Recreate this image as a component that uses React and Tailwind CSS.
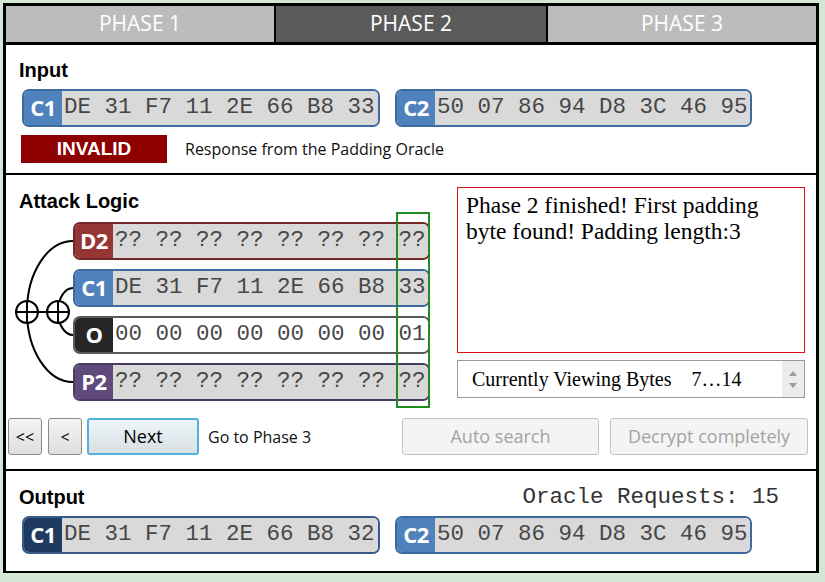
import React from "react";

const MONO = "font-['Liberation_Mono','Courier_New',monospace]";
const UI = "font-['Open_Sans','Noto_Sans',sans-serif]";
const HEAD = "font-['Liberation_Sans',Arial,sans-serif]";
const SERIF = "font-['Liberation_Serif','Times_New_Roman',serif]";

function Block({ label, bytes, labelBg, border, bodyBg = "bg-[#d9d9d9]", className = "" }) {
  return (
    <div className={`flex h-[38px] shrink-0 overflow-hidden rounded-[7px] border-2 ${border} ${className}`}>
      <div className={`flex w-[38px] shrink-0 items-center justify-center pb-[3px] text-[22px] font-bold leading-none tracking-tight text-white ${UI} ${labelBg}`}>
        {label}
      </div>
      <div className={`flex flex-1 items-center whitespace-pre pl-[2px] text-[22.5px] text-[#474747] ${MONO} ${bodyBg}`}>
        {bytes.join(" ")}
      </div>
    </div>
  );
}

const C1 = ["DE", "31", "F7", "11", "2E", "66", "B8", "33"];
const C2 = ["50", "07", "86", "94", "D8", "3C", "46", "95"];
const Q = ["??", "??", "??", "??", "??", "??", "??", "??"];
const O = ["00", "00", "00", "00", "00", "00", "00", "01"];
const OUT = ["DE", "31", "F7", "11", "2E", "66", "B8", "32"];

function XorLines() {
  return (
    <svg className="absolute left-[-60px] top-0" width="62" height="180" viewBox="0 0 62 180" fill="none" stroke="#000" strokeWidth="2">
      <path d="M60 19 A46 70.5 0 0 0 60 160" />
      <path d="M60 66 A15 23.5 0 0 0 60 113" />
      <circle cx="14" cy="90" r="11" fill="#fff" />
      <circle cx="45" cy="90" r="11" fill="#fff" />
      <line x1="14" y1="79" x2="14" y2="101" />
      <line x1="45" y1="79" x2="45" y2="101" />
      <line x1="2" y1="90" x2="57" y2="90" />
    </svg>
  );
}

function WinButton({ children, className = "" }) {
  return (
    <button className={`flex h-[37px] items-center justify-center rounded-[3px] border bg-linear-to-b ${UI} ${className}`}>
      {children}
    </button>
  );
}

export default function App() {
  return (
    <div className="h-[582px] w-[825px] bg-[#d3e7d6] pl-[3px] pt-[3px]">
      <div className="flex h-[570px] w-[816px] flex-col border-[3px] border-b-2 border-black bg-white">
        {/* tabs */}
        <div className={`flex h-[39px] shrink-0 border-b-[3px] border-black text-[21px] text-white ${UI}`}>
          <div className="flex w-[270px] items-center justify-center border-r-2 border-black bg-[#bcbcbc]">PHASE 1</div>
          <div className="flex w-[272px] items-center justify-center border-r-2 border-black bg-[#5a5a5a]">PHASE 2</div>
          <div className="flex flex-1 items-center justify-center bg-[#bcbcbc]">PHASE 3</div>
        </div>

        {/* input */}
        <div className="flex h-[130px] shrink-0 flex-col border-b-2 border-black pl-[16px] pt-[13px]">
          <div className={`-ml-[3px] text-[20px] font-bold leading-[24px] text-black ${HEAD}`}>Input</div>
          <div className="mt-[7px] flex gap-[15px]">
            <Block label="C1" bytes={C1} labelBg="bg-[#4f81bd]" border="border-[#3d6b9f]" className="w-[358px]" />
            <Block label="C2" bytes={C2} labelBg="bg-[#4f81bd]" border="border-[#3d6b9f]" className="w-[357px]" />
          </div>
          <div className="mt-[8px] flex items-center">
            <div className={`-ml-[1px] flex h-[28px] w-[146px] items-center justify-center bg-[#8e0000] text-[19px] font-bold text-white ${HEAD}`}>
              INVALID
            </div>
            <span className={`ml-[18px] text-[16px] text-[#111] ${UI}`}>Response from the Padding Oracle</span>
          </div>
        </div>

        {/* attack logic */}
        <div className="flex h-[296px] shrink-0 flex-col border-b-2 border-black pt-[12px]">
          <div className="flex">
            <div className="w-[451px] pl-[13px]">
              <div className={`mt-[2px] text-[20px] font-bold leading-[24px] text-black ${HEAD}`}>Attack Logic</div>
              <div className="relative ml-[54px] mt-[9px] flex w-[357px] flex-col gap-[9px]">
                <XorLines />
                <Block label="D2" bytes={Q} labelBg="bg-[#963634]" border="border-[#722826]" />
                <Block label="C1" bytes={C1} labelBg="bg-[#4f81bd]" border="border-[#3d6b9f]" />
                <Block label="O" bytes={O} labelBg="bg-[#262626]" border="border-[#5a5a5a]" bodyBg="bg-white" />
                <Block label="P2" bytes={Q} labelBg="bg-[#604a7b]" border="border-[#4a3a60]" />
                <div className="absolute left-[323px] top-[-10px] h-[196px] w-[34px] border-2 border-[#1e8c1e]" />
              </div>
            </div>
            <div className="flex w-[348px] flex-col gap-[7px]">
              <div className={`h-[166px] border border-[#e0101a] pl-[8px] pt-[4px] text-[23.5px] leading-[26px] text-black ${SERIF}`}>
                Phase 2 finished! First padding
                <br />
                byte found! Padding length:3
              </div>
              <div className="flex h-[38px] border border-[#9a9a9a]">
                <div className={`flex flex-1 items-center pl-[14px] text-[20px] text-black ${SERIF}`}>
                  <span>Currently Viewing Bytes</span>
                  <span className="ml-[20px]">7…14</span>
                </div>
                <div className="flex w-[22px] flex-col items-center justify-center gap-[7px] bg-[#ececec]">
                  <svg width="8" height="5" viewBox="0 0 8 5"><path d="M0 5 L4 0 L8 5 Z" fill="#9a9a9a" /></svg>
                  <svg width="8" height="5" viewBox="0 0 8 5"><path d="M0 0 L8 0 L4 5 Z" fill="#9a9a9a" /></svg>
                </div>
              </div>
            </div>
          </div>

          <div className="mt-[17px] flex items-center pl-[2px] pr-[8px]">
            <WinButton className="w-[34px] border-[#8a8a8a] from-[#f4f4f4] to-[#dedede] text-[16px] text-black">&lt;&lt;</WinButton>
            <WinButton className="ml-[6px] w-[34px] border-[#8a8a8a] from-[#f4f4f4] to-[#dedede] text-[16px] text-black">&lt;</WinButton>
            <WinButton className="ml-[5px] w-[112px] border-2 border-[#52b0dc] from-[#eef6fb] to-[#d9dfe3] text-[18px] text-black">Next</WinButton>
            <span className={`ml-[9px] text-[16px] text-[#111] ${UI}`}>Go to Phase 3</span>
            <WinButton className="ml-auto w-[197px] border-[#c2c2c2] from-[#f4f4f4] to-[#f4f4f4] text-[18px] text-[#a3a3a3]">Auto search</WinButton>
            <WinButton className="ml-[11px] w-[198px] border-[#c2c2c2] from-[#f4f4f4] to-[#f4f4f4] text-[18px] text-[#a3a3a3]">Decrypt completely</WinButton>
          </div>
        </div>

        {/* output */}
        <div className="flex flex-1 flex-col pl-[16px] pt-[14px]">
          <div className="flex items-center pr-[37px]">
            <div className={`-ml-[3px] text-[20px] font-bold leading-[24px] text-black ${HEAD}`}>Output</div>
            <div className={`ml-auto whitespace-pre text-[22.5px] leading-[24px] text-[#333] ${MONO}`}>Oracle Requests: 15</div>
          </div>
          <div className="mt-[7px] flex gap-[15px]">
            <Block label="C1" bytes={OUT} labelBg="bg-[#1f3a60]" border="border-[#365b88]" className="w-[358px]" />
            <Block label="C2" bytes={C2} labelBg="bg-[#4f81bd]" border="border-[#3d6b9f]" className="w-[357px]" />
          </div>
        </div>
      </div>
    </div>
  );
}
